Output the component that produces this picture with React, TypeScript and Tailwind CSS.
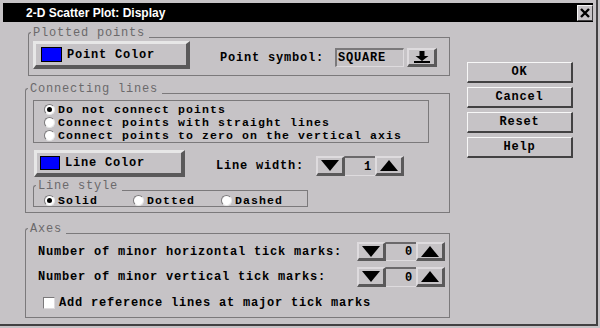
import React from "react";

function Legend({ children }: { children: string }) {
  return (
    <span className="absolute -left-[1px] -top-[10px] pl-[5px] pr-[4px] bg-[#c6c3c6] font-normal text-[#6b696b] text-[12px] tracking-[0.8px] leading-[11px] whitespace-pre">
      <span className="absolute left-0 top-[4px] w-[3px] h-[7px] border-l border-t border-[#7b797b] rounded-tl-[3px]" />
      {children}
    </span>
  );
}

function Radio({ checked }: { checked?: boolean }) {
  return (
    <span className="inline-flex w-[11px] h-[11px] shrink-0 items-center justify-center rounded-full bg-white border border-t-[#7b797b] border-l-[#7b797b] border-r-[#e7e7e7] border-b-[#e7e7e7]">
      {checked && <span className="w-[5px] h-[5px] rounded-full bg-black" />}
    </span>
  );
}

function Tri({ up }: { up?: boolean }) {
  return (
    <svg width="18" height="11" viewBox="0 0 18 11">
      <path d={up ? "M9 0L18 11H0Z" : "M0 0H18L9 11Z"} fill="#000" />
    </svg>
  );
}

function Spin({ value, className }: { value: string; className: string }) {
  const btn =
    "h-full flex items-center justify-center bg-[#c6c3c6] border-t-2 border-l-2 border-t-[#dedbde] border-l-[#dedbde] border-r-[3px] border-b-[3px] border-r-[#5a595a] border-b-[#5a595a]";
  return (
    <div className={`flex ${className}`}>
      <div className={`w-[29px] ${btn}`}>
        <Tri />
      </div>
      <div className="w-[30px] h-full flex items-center justify-end pr-[3px] border-t-2 border-t-[#6b696b] border-b border-b-[#dedbde] leading-none">
        {value}
      </div>
      <div className={`w-[29px] ${btn}`}>
        <Tri up />
      </div>
    </div>
  );
}

function ColorButton({ label, className, swatch }: { label: string; className: string; swatch: string }) {
  return (
    <div
      className={`flex items-center bg-[#c6c3c6] border-t-[3px] border-l-[3px] border-t-[#e7e7e7] border-l-[#e7e7e7] border-r-[4px] border-b-[4px] border-r-[#5a595a] border-b-[#5a595a] ${className}`}
    >
      <span className={`bg-[#0000ff] border border-black ${swatch}`} />
      <span className="ml-[5px] leading-none">{label}</span>
    </div>
  );
}

function DialogButton({ label }: { label: string }) {
  return (
    <div className="w-[106px] h-[21px] flex items-center justify-center bg-[#c6c3c6] border-t-[1px] border-l-[1px] border-t-[#f7f7f7] border-l-[#f7f7f7] border-r-2 border-b-2 border-r-[#424142] border-b-[#424142] leading-none">
      {label}
    </div>
  );
}

function ChoiceRow({ label, checked }: { label: string; checked?: boolean }) {
  return (
    <div className="flex items-center h-[13px] gap-[3px]">
      <Radio checked={checked} />
      <span className="text-[11.5px] tracking-[1.1px] leading-[13px]">{label}</span>
    </div>
  );
}

function StyleOption({ label, checked, className }: { label: string; checked?: boolean; className?: string }) {
  return (
    <div className={`flex items-center gap-[3px] ${className ?? ""}`}>
      <Radio checked={checked} />
      <span className="text-[11.5px] tracking-[1.1px] leading-[13px]">{label}</span>
    </div>
  );
}

export default function App() {
  return (
    <div className="w-[600px] h-[328px] bg-[#c6c3c6] overflow-hidden font-['Liberation_Mono',monospace] text-[12px] tracking-[0.8px] font-bold text-black">
      <div className="w-[598px] h-[326px] border-r-2 border-b-2 border-[#424142] pl-[3px] pt-[3px]">
        {/* title bar */}
        <div className="w-[590px] h-[19px] bg-black flex items-center justify-between">
          <span className="pl-[23px] font-['Liberation_Sans',Arial,sans-serif] text-[12px] tracking-normal font-bold text-white leading-none">
            2-D Scatter Plot: Display
          </span>
          <div className="w-[16px] h-[16px] flex items-center justify-center bg-[#c6c3c6] border-t border-l border-t-[#f7f7f7] border-l-[#f7f7f7] border-r border-b border-r-[#424142] border-b-[#424142]">
            <svg width="10" height="10" viewBox="0 0 10 10">
              <path d="M1 1L9 9M9 1L1 9" stroke="#000" strokeWidth="2.4" />
            </svg>
          </div>
        </div>

        <div className="flex">
          <div className="flex flex-col w-[425px] ml-[22px]">
            {/* Plotted points */}
            <div className="relative mt-[15px] ml-[3px] w-[422px] h-[39px] border border-[#7b797b]">
              <Legend>Plotted points</Legend>
              <div className="flex items-start pl-[4px] pt-[3px]">
                <ColorButton label="Point Color" className="w-[157px] h-[28px] pl-[5px]" swatch="w-[21px] h-[15px]" />
                <div className="flex items-center h-[19px] mt-[7px] ml-[30px]">
                  <span className="leading-none">Point symbol:</span>
                  <div className="ml-[11px] w-[69px] h-[19px] flex items-center pl-[1px] border-t-2 border-l-2 border-t-[#7b797b] border-l-[#7b797b] border-r border-b border-r-[#dedbde] border-b-[#dedbde] leading-none">
                    SQUARE
                  </div>
                  <div className="ml-[3px] w-[30px] h-[19px] flex items-center justify-center bg-[#c6c3c6] border-t-2 border-l-2 border-t-[#dedbde] border-l-[#dedbde] border-r-[3px] border-b-[3px] border-r-[#5a595a] border-b-[#5a595a]">
                    <svg width="16" height="12" viewBox="0 0 16 12">
                      <path d="M5.5 0h5v5h4l-6.5 5-6.5-5h4z" fill="#000" />
                      <rect x="0" y="10" width="16" height="2" fill="#000" />
                    </svg>
                  </div>
                </div>
              </div>
            </div>

            {/* Connecting lines */}
            <div className="relative mt-[17px] w-[425px] h-[120px] border border-[#7b797b]">
              <Legend>Connecting lines</Legend>
              <div className="ml-[7px] mt-[6px] w-[396px] h-[43px] border border-[#7b797b] pl-[10px] pt-[2px] flex flex-col">
                <ChoiceRow label="Do not connect points" checked />
                <ChoiceRow label="Connect points with straight lines" />
                <ChoiceRow label="Connect points to zero on the vertical axis" />
              </div>

              <div className="flex items-start mt-[7px] ml-[8px]">
                <ColorButton label="Line Color" className="w-[151px] h-[27px] pl-[3px]" swatch="w-[20px] h-[14px]" />
                <div className="flex items-center h-[20px] mt-[6px] ml-[31px]">
                  <span className="leading-none">Line width:</span>
                  <Spin value="1" className="ml-[12px] h-[20px]" />
                </div>
              </div>

              <div className="relative mt-[13px] ml-[7px] w-[275px] h-[17px] border border-[#7b797b] flex items-center pl-[10px] pt-[3px]">
                <Legend>Line style</Legend>
                <StyleOption label="Solid" checked className="w-[89px]" />
                <StyleOption label="Dotted" className="w-[88px]" />
                <StyleOption label="Dashed" />
              </div>
            </div>

            {/* Axes */}
            <div className="relative mt-[20px] w-[425px] h-[85px] border border-[#7b797b] pl-[12px]">
              <Legend>Axes</Legend>
              <div className="flex items-center mt-[8px] h-[19px]">
                <span className="w-[319px] leading-none">Number of minor horizontal tick marks:</span>
                <Spin value="0" className="h-[19px]" />
              </div>
              <div className="flex items-center mt-[6px] h-[20px]">
                <span className="w-[319px] leading-none">Number of minor vertical tick marks:</span>
                <Spin value="0" className="h-[20px]" />
              </div>
              <div className="flex items-center mt-[10px] ml-[5px] gap-[4px] leading-none">
                <span className="w-[12px] h-[12px] bg-white border border-t-[#7b797b] border-l-[#7b797b] border-r-[#dedbde] border-b-[#dedbde]" />
                <span>Add reference lines at major tick marks</span>
              </div>
            </div>
          </div>

          {/* action buttons */}
          <div className="ml-[17px] mt-[40px] flex flex-col gap-[4px]">
            <DialogButton label="OK" />
            <DialogButton label="Cancel" />
            <DialogButton label="Reset" />
            <DialogButton label="Help" />
          </div>
        </div>
      </div>
    </div>
  );
}
